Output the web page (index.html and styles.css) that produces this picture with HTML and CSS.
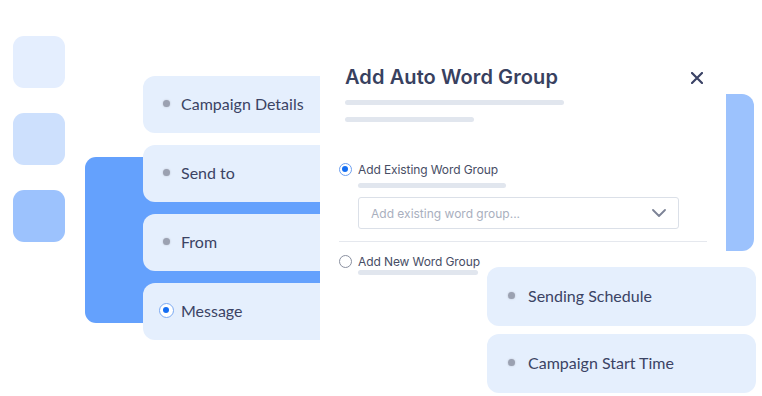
FILE: index.html
```html
<!DOCTYPE html>
<html>
<head>
<meta charset="utf-8">
<link rel="stylesheet" href="styles.css">
</head>
<body>
<div class="stage">
  <div class="squares">
    <div class="sq sq1"></div>
    <div class="sq sq2"></div>
    <div class="sq sq3"></div>
  </div>
  <div class="block"></div>
  <div class="steps">
    <div class="step"><span class="dot"></span><span>Campaign Details</span></div>
    <div class="step"><span class="dot"></span><span>Send to</span></div>
    <div class="step"><span class="dot"></span><span>From</span></div>
    <div class="step"><span class="radio-on"></span><span>Message</span></div>
  </div>
  <div class="bar"></div>
  <div class="modal">
    <div class="head">
      <h1 class="title">Add Auto Word Group</h1>
      <svg class="close" width="12" height="12" viewBox="0 0 12 12"><path d="M1 1L11 11M11 1L1 11" stroke="#3b4366" stroke-width="2.2" stroke-linecap="round"/></svg>
    </div>
    <div class="ph ph1"></div>
    <div class="ph ph2"></div>
    <div class="opt opt1">
      <span class="r r-on"></span>
      <span class="opt-label">Add Existing Word Group</span>
    </div>
    <div class="ph ph3"></div>
    <div class="select">
      <span class="placeholder">Add existing word group...</span>
      <svg width="14" height="8" viewBox="0 0 14 8"><path d="M1 1L7 7L13 1" fill="none" stroke="#7c8396" stroke-width="1.8" stroke-linecap="round" stroke-linejoin="round"/></svg>
    </div>
    <div class="divider"></div>
    <div class="opt opt2">
      <span class="r"></span>
      <span class="opt-label">Add New Word Group</span>
    </div>
    <div class="ph ph4"></div>
  </div>
  <div class="rcards">
    <div class="step rstep"><span class="dot"></span><span>Sending Schedule</span></div>
    <div class="step rstep"><span class="dot"></span><span>Campaign Start Time</span></div>
  </div>
</div>
</body>
</html>
```
FILE: styles.css
```css
* { box-sizing: border-box; margin: 0; padding: 0; }
html, body { background: #ffffff; }
body { width: 762px; height: 396px; overflow: hidden; font-family: "Lato", "Noto Sans", sans-serif; }
.stage { position: relative; width: 762px; height: 396px; }

.squares { position: absolute; left: 13px; top: 36px; display: flex; flex-direction: column; gap: 25px; }
.sq { width: 52px; height: 52px; border-radius: 11px; }
.sq1 { background: #e4eefe; }
.sq2 { background: #cde0fd; }
.sq3 { background: #9cc2fd; }

.block { position: absolute; left: 85px; top: 157px; width: 250px; height: 166px; background: #64a1fd; border-radius: 11px 0 0 11px; }

.steps { position: absolute; left: 143px; top: 76px; width: 200px; display: flex; flex-direction: column; gap: 12px; }
.step { height: 57px; background: #e5effd; border-radius: 12px 0 0 12px; display: flex; align-items: center; padding-left: 20px; padding-bottom: 2px; gap: 11px; color: #3b4364; font-size: 16px; }
.dot { width: 7px; height: 7px; border-radius: 50%; background: #9ba1b1; box-shadow: 0 0 2px #b9bfcc; flex: none; }
.radio-on { width: 15px; height: 15px; border-radius: 50%; border: 1.5px solid #7aa9f3; background: #fff; position: relative; margin-left: -4px; margin-right: -4px; flex: none; }
.radio-on::after { content: ""; position: absolute; left: 3px; top: 3px; width: 6px; height: 6px; border-radius: 50%; background: #156ef3; }

.bar { position: absolute; left: 700px; top: 94px; width: 54px; height: 157px; background: #9cc2fd; border-radius: 0 12px 12px 0; }

.modal { position: absolute; left: 320px; top: 40px; width: 406px; height: 356px; background: #ffffff; padding: 0 19px 0 19px; font-family: "Inter", "Lato", sans-serif; }
.head { display: flex; justify-content: space-between; align-items: center; padding-left: 6px; padding-right: 4px; margin-top: 24px; height: 25px; }
.title { font-size: 20px; font-weight: 600; color: #38415f; letter-spacing: 0.1px; }
.close { margin-top: 2px; }
.ph { background: #e1e6ee; border-radius: 4px; height: 5px; }
.ph1 { width: 219px; margin: 11px 0 0 6px; }
.ph2 { width: 129px; margin: 12px 0 0 6px; }
.opt { display: flex; align-items: center; gap: 6px; height: 14px; }
.opt1 { margin-top: 40px; }
.opt2 { margin-top: 12px; }
.opt-label { font-size: 12px; color: #474d65; letter-spacing: -0.1px; }
.r { width: 13px; height: 13px; border-radius: 50%; border: 1px solid #8a90a0; background: #fff; position: relative; flex: none; }
.r-on { border: 1.5px solid #6ea0f0; }
.r-on::after { content: ""; position: absolute; left: 2px; top: 2px; width: 6px; height: 6px; border-radius: 50%; background: #146ef2; }
.ph3 { width: 148px; margin: 7px 0 0 19px; }
.ph4 { width: 120px; margin: 2px 0 0 19px; }
.select { margin: 9px 0 0 19px; width: 321px; height: 32px; border: 1px solid #dbe0e8; border-radius: 3px; display: flex; align-items: center; justify-content: space-between; padding: 0 12px 0 12px; }
.placeholder { font-size: 12px; color: #a9afbe; }
.divider { height: 1px; background: #e5e8ee; width: 368px; margin-top: 12px; }

.rcards { position: absolute; left: 487px; top: 267px; width: 269px; display: flex; flex-direction: column; gap: 8px; }
.rstep { height: 59px; border-radius: 12px; padding-left: 21px; gap: 13px; }
```
